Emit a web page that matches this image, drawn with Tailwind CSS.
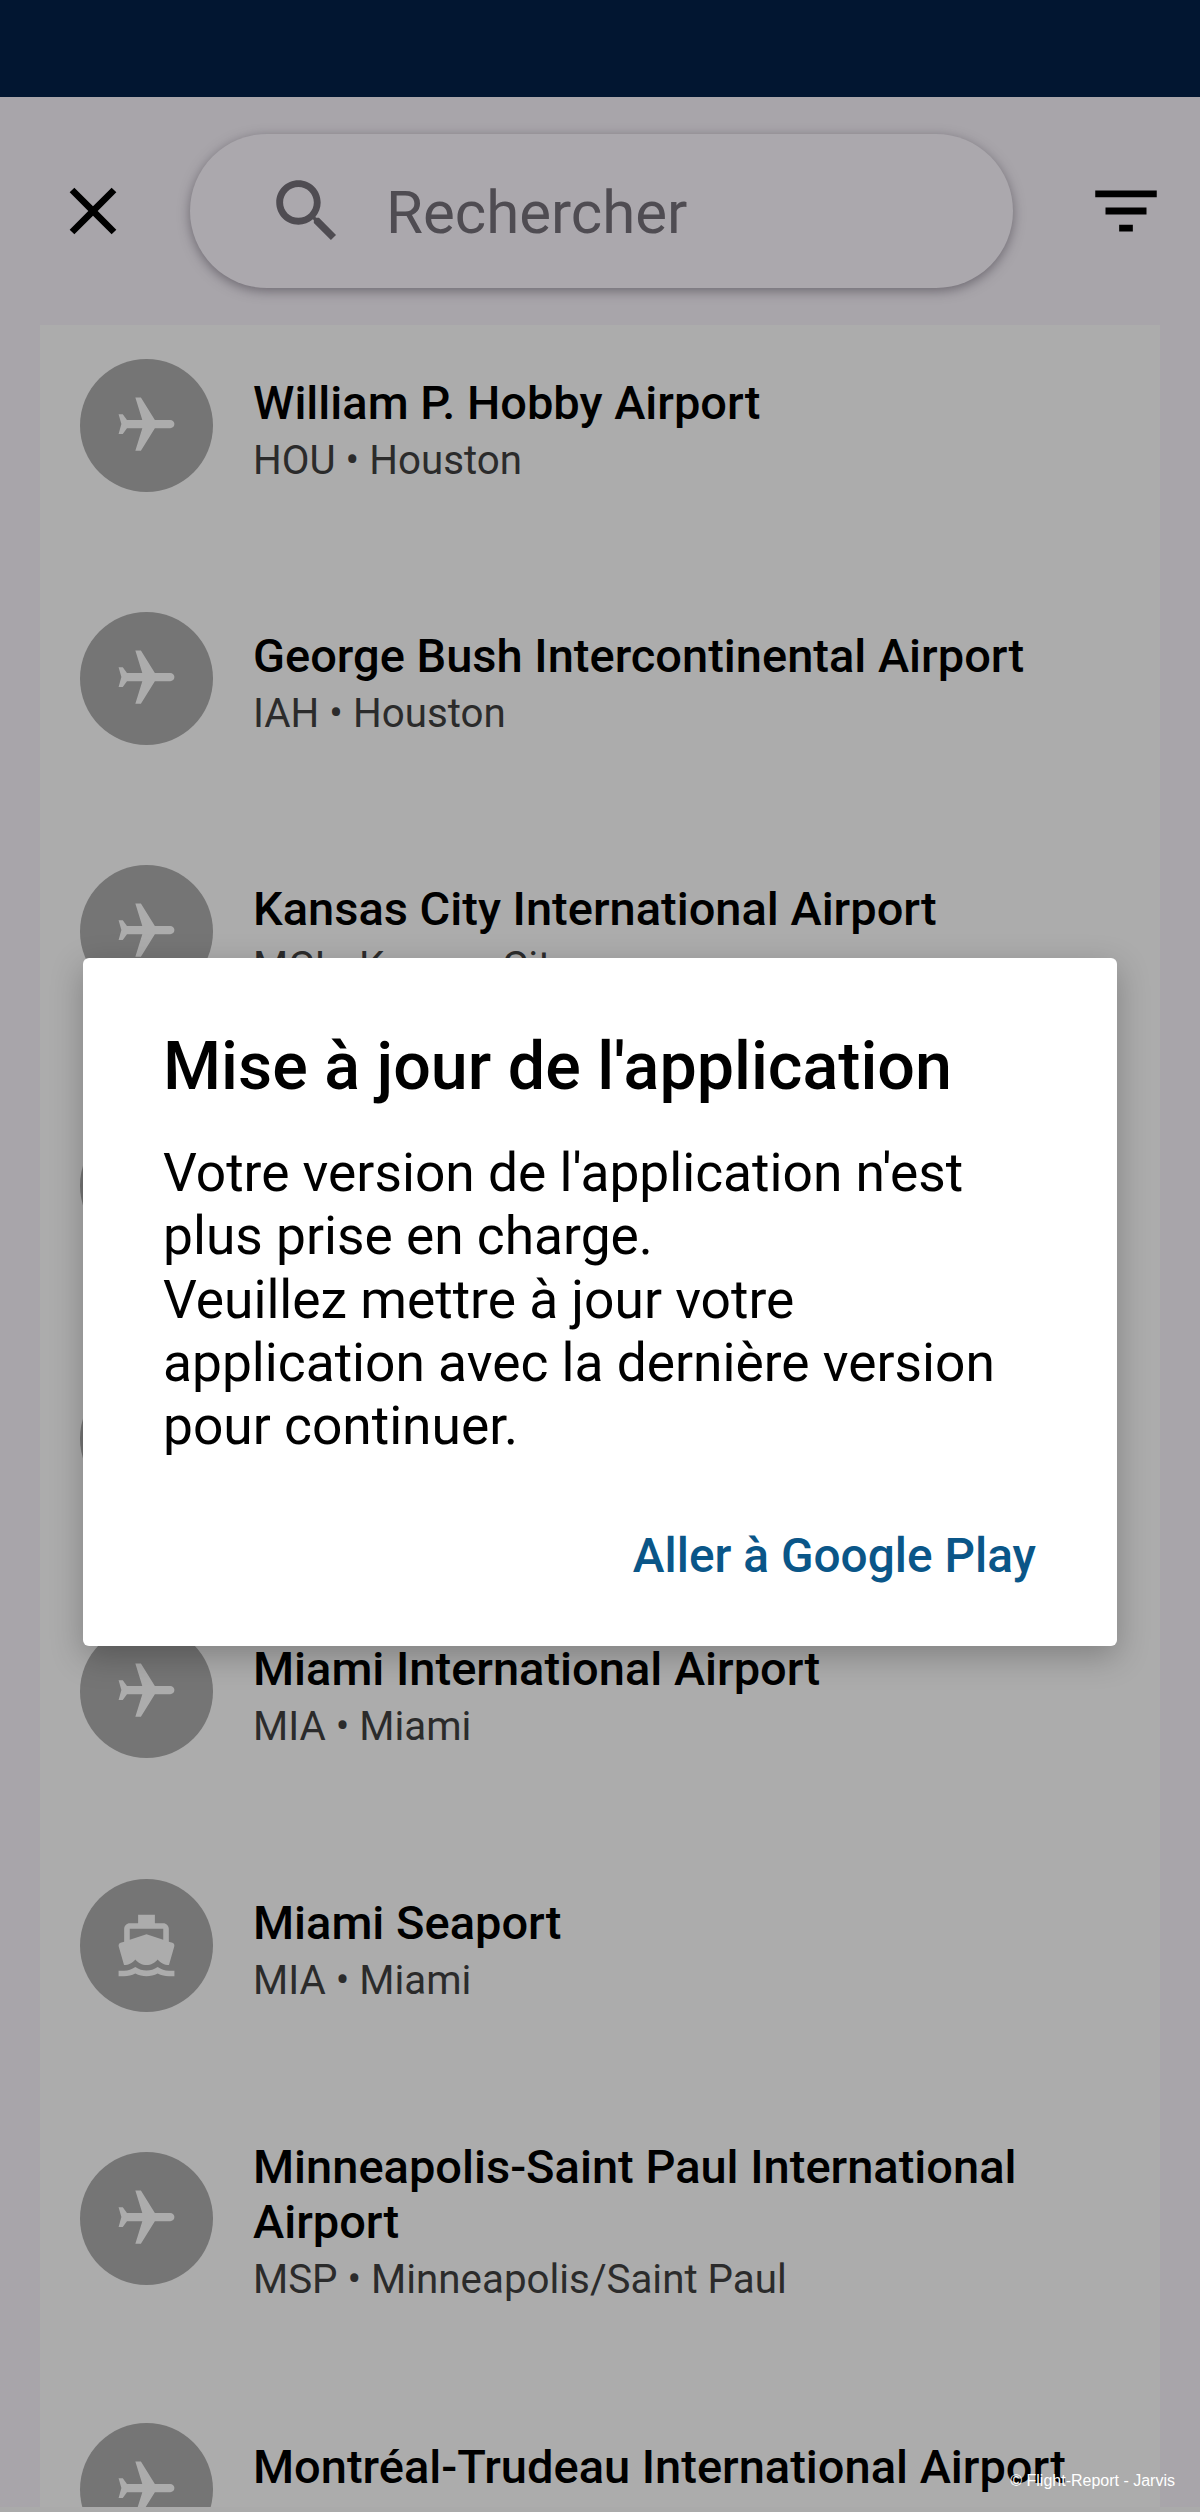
<!DOCTYPE html>
<html lang="fr">
<head>
    <meta charset="UTF-8">
    <meta name="viewport" content="width=device-width, initial-scale=1.0">
    <title>Rechercher</title>
    <script src="https://cdn.jsdelivr.net/npm/@tailwindcss/browser@4"></script>
</head>
<body class="relative h-[2512px] w-[1200px] overflow-hidden bg-[#a8a5aa] font-['Roboto',sans-serif]">

    <!-- barre de statut -->
    <div class="h-[97px] bg-[#021631]"></div>

    <!-- recherche -->
    <div class="flex h-[228px] items-center pl-[53px]">
        <svg class="h-[80px] w-[80px]" viewBox="0 0 24 24" fill="#000"><path d="M19 6.41L17.59 5 12 10.59 6.41 5 5 6.41 10.59 12 5 17.59 6.41 19 12 13.41 17.59 19 19 17.59 13.41 12z"/></svg>
        <div class="ml-[57px] flex h-[154px] w-[823px] items-center rounded-[77px] bg-[#aba8ad] pl-[76px] shadow-[0_3px_12px_rgba(60,55,65,0.55)]">
            <svg class="h-[82px] w-[82px] shrink-0" viewBox="0 0 24 24" fill="#4f4c52"><path d="M15.5 14h-.79l-.28-.27C15.41 12.59 16 11.11 16 9.5 16 5.91 13.09 3 9.5 3S3 5.91 3 9.5 5.91 16 9.5 16c1.61 0 3.09-.59 4.23-1.57l.27.28v.79l5 4.99L20.49 19l-4.99-5zm-6 0C7.01 14 5 11.99 5 9.5S7.01 5 9.5 5 14 7.01 14 9.5 11.99 14 9.5 14z"/></svg>
            <span class="ml-[38px] translate-y-[2px] text-[60px] text-[#4f4c52]">Rechercher</span>
        </div>
        <svg class="ml-[72px] h-[82px] w-[82px]" viewBox="0 0 24 24" fill="#000"><path d="M10 18h4v-2h-4v2zM3 6v2h18V6H3zm3 7h12v-2H6v2z"/></svg>
    </div>

    <!-- liste -->
    <div class="mx-[40px] h-[2182px] overflow-hidden bg-[#acacac] pl-[40px] pt-[33.5px]">

        <div class="mb-[120.4px] flex items-center gap-[40px]">
            <div class="flex h-[133px] w-[133px] shrink-0 items-center justify-center rounded-full bg-[#757575]">
                <svg class="h-[67px] w-[67px] rotate-90" viewBox="0 0 24 24" fill="#acacac"><path d="M21 16v-2l-8-5V3.5c0-.83-.67-1.5-1.5-1.5S10 2.67 10 3.5V9l-8 5v2l8-2.5V19l-2 1.5V22l3.5-1 3.5 1v-1.5L13 19v-5.5l8 2.5z"/></svg>
            </div>
            <div class="translate-y-[8px]">
                <p class="text-[47px] font-medium leading-[55px] text-black">William P. Hobby Airport</p>
                <p class="text-[40.3px] leading-[62px] text-[#2b2b2b]">HOU • Houston</p>
            </div>
        </div>

        <div class="mb-[120.4px] flex items-center gap-[40px]">
            <div class="flex h-[133px] w-[133px] shrink-0 items-center justify-center rounded-full bg-[#757575]">
                <svg class="h-[67px] w-[67px] rotate-90" viewBox="0 0 24 24" fill="#acacac"><path d="M21 16v-2l-8-5V3.5c0-.83-.67-1.5-1.5-1.5S10 2.67 10 3.5V9l-8 5v2l8-2.5V19l-2 1.5V22l3.5-1 3.5 1v-1.5L13 19v-5.5l8 2.5z"/></svg>
            </div>
            <div class="translate-y-[8px]">
                <p class="text-[47px] font-medium leading-[55px] text-black">George Bush Intercontinental Airport</p>
                <p class="text-[40.3px] leading-[62px] text-[#2b2b2b]">IAH • Houston</p>
            </div>
        </div>

        <div class="mb-[120.4px] flex items-center gap-[40px]">
            <div class="flex h-[133px] w-[133px] shrink-0 items-center justify-center rounded-full bg-[#757575]">
                <svg class="h-[67px] w-[67px] rotate-90" viewBox="0 0 24 24" fill="#acacac"><path d="M21 16v-2l-8-5V3.5c0-.83-.67-1.5-1.5-1.5S10 2.67 10 3.5V9l-8 5v2l8-2.5V19l-2 1.5V22l3.5-1 3.5 1v-1.5L13 19v-5.5l8 2.5z"/></svg>
            </div>
            <div class="translate-y-[8px]">
                <p class="text-[47px] font-medium leading-[55px] text-black">Kansas City International Airport</p>
                <p class="text-[40.3px] leading-[62px] text-[#2b2b2b]">MCI • Kansas City</p>
            </div>
        </div>

        <!-- lignes cachées par le dialogue -->
        <div class="mb-[120.4px] h-[133px] w-[133px] rounded-full bg-[#757575]"></div>
        <div class="mb-[120.4px] h-[133px] w-[133px] rounded-full bg-[#757575]"></div>

        <div class="mb-[120.4px] flex items-center gap-[40px]">
            <div class="flex h-[133px] w-[133px] shrink-0 items-center justify-center rounded-full bg-[#757575]">
                <svg class="h-[67px] w-[67px] rotate-90" viewBox="0 0 24 24" fill="#acacac"><path d="M21 16v-2l-8-5V3.5c0-.83-.67-1.5-1.5-1.5S10 2.67 10 3.5V9l-8 5v2l8-2.5V19l-2 1.5V22l3.5-1 3.5 1v-1.5L13 19v-5.5l8 2.5z"/></svg>
            </div>
            <div class="translate-y-[8px]">
                <p class="text-[47px] font-medium leading-[55px] text-black">Miami International Airport</p>
                <p class="text-[40.3px] leading-[62px] text-[#2b2b2b]">MIA • Miami</p>
            </div>
        </div>

        <div class="mb-[120.4px] flex items-center gap-[40px]">
            <div class="flex h-[133px] w-[133px] shrink-0 items-center justify-center rounded-full bg-[#757575]">
                <svg class="h-[67px] w-[67px]" viewBox="0 0 24 24" fill="#acacac"><path d="M20 21c-1.39 0-2.78-.47-4-1.32-2.44 1.71-5.56 1.71-8 0C6.78 20.53 5.39 21 4 21H2v2h2c1.38 0 2.74-.35 4-.99 2.52 1.29 5.48 1.29 8 0 1.26.65 2.62.99 4 .99h2v-2h-2zM3.95 19H4c1.6 0 3.02-.88 4-2 .98 1.12 2.4 2 4 2s3.02-.88 4-2c.98 1.12 2.4 2 4 2h.05l1.89-6.68c.08-.26.06-.54-.06-.78s-.34-.42-.6-.5L20 10.62V6c0-1.1-.9-2-2-2h-3V1H9v3H6c-1.1 0-2 .9-2 2v4.62l-1.29.42c-.26.08-.48.26-.6.5s-.15.52-.06.78L3.95 19zM6 6h12v3.97L12 8 6 9.97V6z"/></svg>
            </div>
            <div class="translate-y-[8px]">
                <p class="text-[47px] font-medium leading-[55px] text-black">Miami Seaport</p>
                <p class="text-[40.3px] leading-[62px] text-[#2b2b2b]">MIA • Miami</p>
            </div>
        </div>

        <div class="mb-[119px] flex items-center gap-[40px]">
            <div class="flex h-[133px] w-[133px] shrink-0 items-center justify-center rounded-full bg-[#757575]">
                <svg class="h-[67px] w-[67px] rotate-90" viewBox="0 0 24 24" fill="#acacac"><path d="M21 16v-2l-8-5V3.5c0-.83-.67-1.5-1.5-1.5S10 2.67 10 3.5V9l-8 5v2l8-2.5V19l-2 1.5V22l3.5-1 3.5 1v-1.5L13 19v-5.5l8 2.5z"/></svg>
            </div>
            <div class="w-[830px] translate-y-[7px]">
                <p class="text-[47px] font-medium leading-[55px] text-black">Minneapolis-Saint Paul International Airport</p>
                <p class="text-[40.3px] leading-[62px] text-[#2b2b2b]">MSP • Minneapolis/Saint Paul</p>
            </div>
        </div>

        <div class="flex items-center gap-[40px]">
            <div class="flex h-[133px] w-[133px] shrink-0 items-center justify-center rounded-full bg-[#757575]">
                <svg class="h-[67px] w-[67px] rotate-90" viewBox="0 0 24 24" fill="#acacac"><path d="M21 16v-2l-8-5V3.5c0-.83-.67-1.5-1.5-1.5S10 2.67 10 3.5V9l-8 5v2l8-2.5V19l-2 1.5V22l3.5-1 3.5 1v-1.5L13 19v-5.5l8 2.5z"/></svg>
            </div>
            <div class="h-[117px] translate-y-[8px]">
                <p class="text-[47px] font-medium leading-[55px] text-black">Montréal-Trudeau International Airport</p>
            </div>
        </div>
    </div>

    <!-- barre de navigation -->
    <div class="h-[5px] bg-[#aaaaaa]"></div>

    <!-- dialogue -->
    <div class="absolute left-[83px] top-[958px] h-[688px] w-[1034px] rounded-[6px] bg-white pl-[80px] pr-[81px] pt-[66px] shadow-[0_10px_32px_rgba(0,0,0,0.25)]">
        <h2 class="text-[66.4px] font-medium leading-[84px] text-black">Mise à jour de l'application</h2>
        <p class="mt-[34px] text-[53.3px] leading-[63.3px] text-black">Votre version de l'application n'est plus prise en charge.<br>Veuillez mettre à jour votre application avec la dernière version pour continuer.</p>
        <div class="mt-[68px] text-right text-[47.8px] font-medium leading-[60px] text-[#0a5688]">Aller à Google Play</div>
    </div>

    <!-- filigrane -->
    <div class="absolute right-[25px] top-[2472px] font-['Liberation_Sans',sans-serif] text-[16px] leading-[18px] text-white">© Flight-Report - Jarvis</div>
</body>
</html>
